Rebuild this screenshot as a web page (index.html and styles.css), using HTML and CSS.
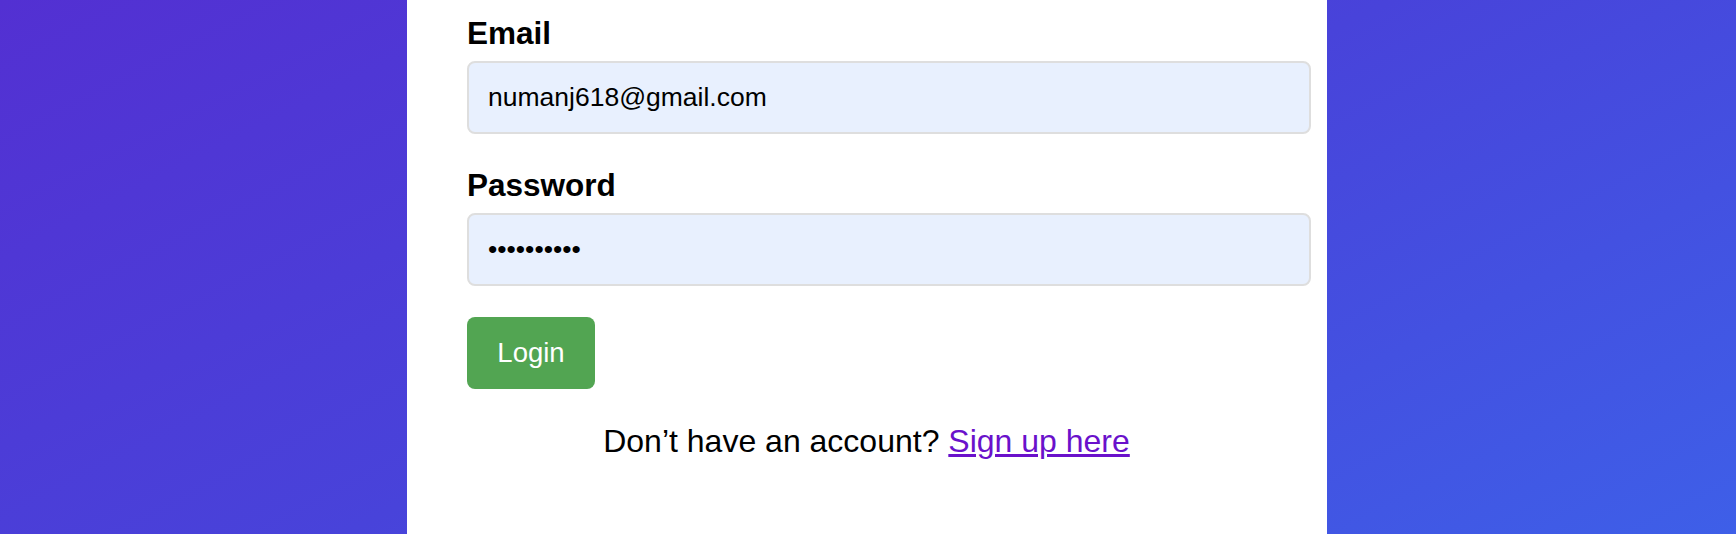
FILE: index.html
```html
<!DOCTYPE html>
<html lang="en">
<head>
<meta charset="utf-8">
<title>Login</title>
<link rel="stylesheet" href="styles.css">
</head>
<body>
  <main class="card">
    <form class="login-form">
      <div class="field">
        <label class="field-label" for="email">Email</label>
        <input class="field-input" id="email" type="email" value="numanj618@gmail.com">
      </div>
      <div class="field">
        <label class="field-label" for="password">Password</label>
        <input class="field-input" id="password" type="password" value="1234567890">
      </div>
      <button class="login-btn" type="button">Login</button>
      <p class="signup-note">Don’t have an account? <a class="signup-link" href="#">Sign up here</a></p>
    </form>
  </main>
</body>
</html>
```

FILE: styles.css
```css
html, body {
  margin: 0;
  padding: 0;
  height: 100%;
}

body {
  font-family: "Liberation Sans", Arial, sans-serif;
  color: #000;
  background: linear-gradient(153deg, #5330d2 0%, #4843da 50%, #3e5fe8 100%);
  display: flex;
  justify-content: center;
  overflow: hidden;
}

.card {
  width: 920px;
  min-height: 100vh;
  background: #fff;
  box-sizing: border-box;
  padding: 15px 16px 0 60px;
  margin-right: 2px;
}

.login-form {
  display: flex;
  flex-direction: column;
  align-items: flex-start;
}

.field {
  width: 100%;
  display: flex;
  flex-direction: column;
  gap: 10px;
  margin-bottom: 33px;
}

.field + .field {
  margin-bottom: 31px;
}

.field-label {
  font-weight: bold;
  font-size: 31.5px;
  line-height: 36px;
  height: 36px;
}

.field-input {
  width: 100%;
  height: 73px;
  box-sizing: border-box;
  border: 2px solid #dedede;
  border-radius: 8px;
  background: #e8f0fe;
  padding: 0 20px 0 19px;
  font-family: "Liberation Sans", Arial, sans-serif;
  font-size: 26.5px;
  color: #000;
  outline: none;
}

.login-btn {
  width: 128px;
  height: 72px;
  border: none;
  border-radius: 8px;
  background: #52a552;
  color: #fff;
  font-family: "Liberation Sans", Arial, sans-serif;
  font-size: 27.5px;
  padding: 0;
  cursor: pointer;
}

.signup-note {
  align-self: stretch;
  margin: 34px 45px 0 0;
  text-align: center;
  font-size: 32px;
  line-height: 36px;
}

.signup-link {
  color: #6a11cb;
  text-decoration: underline;
}
```
